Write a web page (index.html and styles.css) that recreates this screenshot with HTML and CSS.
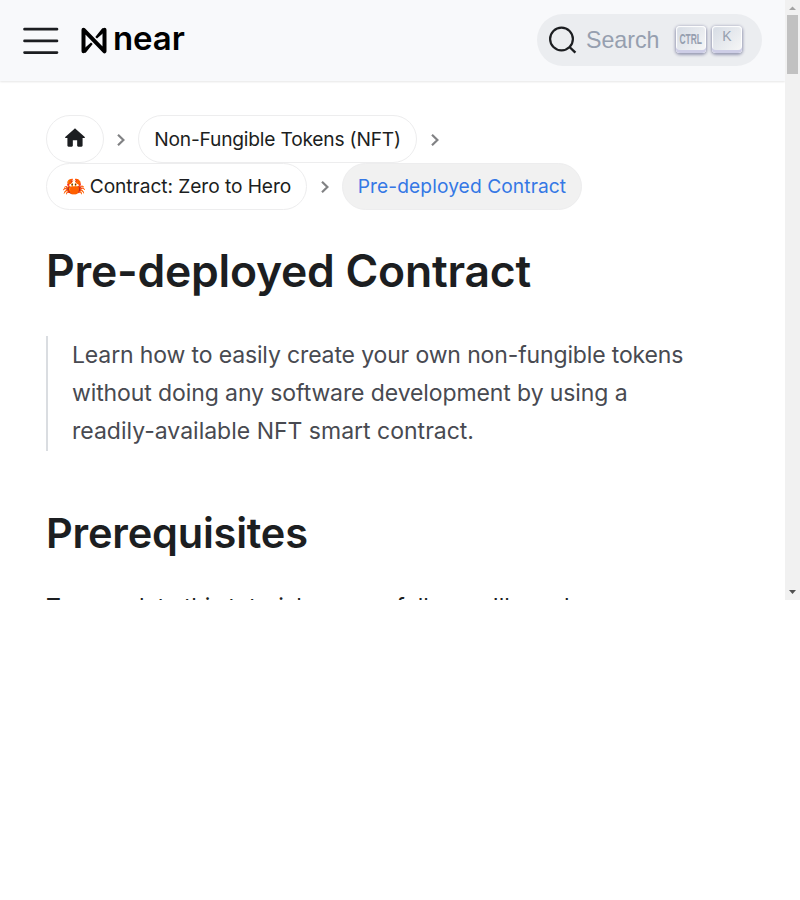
FILE: index.html
```html
<!DOCTYPE html>
<html lang="en">
<head>
<meta charset="utf-8">
<title>Pre-deployed Contract</title>
<link rel="stylesheet" href="styles.css">
</head>
<body>
<div class="viewport">
  <div class="page">
    <header class="navbar">
      <svg class="menu" width="36" height="36" viewBox="0 0 30 30"><path d="M1.300 5.200H28.300M1.300 14.900H28.300M1.300 24.600H28.300" stroke="#1c1e21" stroke-width="2.300" stroke-linecap="round"/></svg>
      <div class="brand">
        <svg width="26" height="27" viewBox="0 0 26 27"><path fill="none" stroke="#000" stroke-width="4" stroke-linecap="round" stroke-linejoin="round" d="M2.500 24.300V2.700L23.500 24.300V2.700"/><path d="M21.500 .9L14.300 10L16 11.500L24 4.500ZM4.500 26.100L11.700 17L10 15.500L2 22.500Z"/></svg>
        <span class="wordmark">near</span>
      </div>
      <div class="search">
        <svg class="lens" width="30" height="30" viewBox="0 0 30 30" fill="none" stroke="#1c1e21" stroke-width="2.200"><circle cx="13.500" cy="14" r="11.400"/><path d="M21.500 22L27.400 27.700" stroke-width="2.400"/></svg>
        <span class="placeholder">Search</span>
        <kbd class="key"><svg width="30" height="24" viewBox="0 0 30 24"><text x="3.500" y="17.500" textLength="22.500" lengthAdjust="spacingAndGlyphs">CTRL</text></svg></kbd>
        <kbd class="key">K</kbd>
      </div>
    </header>
    <main>
      <nav class="crumbs">
        <div class="row first">
          <a class="pill home"><svg width="26" height="26" viewBox="0 0 24 24"><path d="M10 19v-5h4v5c0 .55.45 1 1 1h3c.55 0 1-.45 1-1v-7h1.700c.46 0 .68-.57.33-.87L12.670 3.600c-.38-.34-.96-.34-1.340 0l-8.360 7.530c-.34.300-.13.870.33.870H5v7c0 .55.45 1 1 1h3c.55 0 1-.45 1-1z" fill="#1c1e21"/></svg></a>
          <svg class="chev" width="8" height="12" viewBox="0 0 8 12"><path d="M1 .8L6.400 6L1 11.200"/></svg>
          <a class="pill nft">Non-Fungible Tokens (NFT)</a>
          <svg class="chev last" width="8" height="12" viewBox="0 0 8 12"><path d="M1 .8L6.400 6L1 11.200"/></svg>
        </div>
        <div class="row second">
          <a class="pill hero"><span class="crab">🦀</span>Contract: Zero to Hero</a>
          <svg class="chev" width="8" height="12" viewBox="0 0 8 12"><path d="M1 .8L6.400 6L1 11.200"/></svg>
          <a class="pill active">Pre-deployed Contract</a>
        </div>
      </nav>
      <h1>Pre-deployed Contract</h1>
      <blockquote><span class="l1">Learn how to easily create your own non-fungible tokens</span><br><span class="l2">without doing any software development by using a</span><br>readily-available NFT smart contract.</blockquote>
      <h2>Prerequisites</h2>
      <p>To complete this tutorial successfully, you'll need:</p>
    </main>
  </div>
  <div class="scrollbar">
    <svg width="15" height="15"><path d="M4 10L7.500 6.500L11 10Z" fill="#a3a3a3"/></svg>
    <div class="thumb"></div>
    <svg class="down" width="15" height="15"><path d="M4 5L7.500 9L11 5Z" fill="#505050"/></svg>
  </div>
</div>
</body>
</html>
```
FILE: styles.css
```css
* { box-sizing: border-box; }
body { margin: 0; background: #fff; color: #1c1e21; font-family: Inter, sans-serif; font-optical-sizing: none; }
svg { display: block; flex: none; overflow: visible; }
.viewport { display: flex; width: 800px; height: 600px; overflow: hidden; }
.page { width: 785px; height: 600px; overflow: hidden; }
.navbar { display: flex; align-items: center; height: 81px; padding: 0 23px; background: #f8f9fb; box-shadow: 0 1px 2px rgba(0,0,0,.1); }
.brand { display: flex; align-items: center; margin-left: 22px; height: 27px; color: #000; }
.wordmark { margin-left: 6px; font-size: 33px; font-weight: 600; line-height: 27px; letter-spacing: -.1px; margin-top: -5px; }
.search { display: flex; align-items: center; width: 225px; height: 52px; margin: -2px 0 0 auto; padding-left: 11px; border-radius: 26px; background: #ebedf0; }
.placeholder { width: 90px; margin-left: 8px; font: 23.200px/30px "Liberation Sans", sans-serif; color: #969faf; }
.key { width: 30px; height: 27px; margin-right: 6px; border-radius: 4px; background: linear-gradient(-225deg,#d5dbe4,#f8f8f8); box-shadow: inset 0 -3px 0 #cdcde6, inset 0 0 1px 1px #fff, 0 1px 3px 1px rgba(30,35,90,.4); color: #969faf; text-align: center; font: 14px/21px "Liberation Sans", sans-serif; }
.key text { font: bold 14.500px "Liberation Sans", sans-serif; fill: #969faf; }
main { padding: 34px 46px 0; }
.row { display: flex; align-items: center; height: 48px; }
.second { height: 47px; }
.pill { display: flex; align-items: center; justify-content: center; height: 100%; border: 1px solid #ededee; border-radius: 24px; font-size: 19.200px; white-space: nowrap; }
.home { width: 58px; padding-bottom: 3px; }
.nft { width: 279px; letter-spacing: -.2px; }
.hero { width: 261px; letter-spacing: -.08px; padding-bottom: 1px; }
.crab { margin-right: 4px; }
.active { width: 240px; padding-bottom: 1px; letter-spacing: .08px; background: #f1f1f1; color: #3578e5; }
.chev { margin: 1px 13px 0 14px; fill: none; stroke: #818284; stroke-width: 2.200; }
.first .chev { margin-left: 13px; }
.first .last { margin-left: 14px; }
h1 { margin: 34px 0 0; font-size: 44.500px; line-height: 54px; font-weight: 600; letter-spacing: -.25px; }
blockquote { margin: 38px 0 0; height: 115px; padding-left: 24px; border-left: 2px solid #dadde1; color: #484a51; font-size: 23px; line-height: 38px; white-space: nowrap; }
.l1 { letter-spacing: -.14px; }
.l2 { letter-spacing: -.1px; }
h2 { margin: 56px 0 0; font-size: 41.500px; line-height: 52px; font-weight: 600; letter-spacing: -.2px; }
p { margin: 29px 0 0; font-size: 23px; line-height: 38px; letter-spacing: -.22px; white-space: nowrap; }
.scrollbar { display: flex; flex-direction: column; width: 15px; height: 600px; background: #f1f1f1; }
.thumb { width: 11px; height: 59px; margin-left: 2px; background: #c1c1c1; }
.down { margin-top: auto; }
```
